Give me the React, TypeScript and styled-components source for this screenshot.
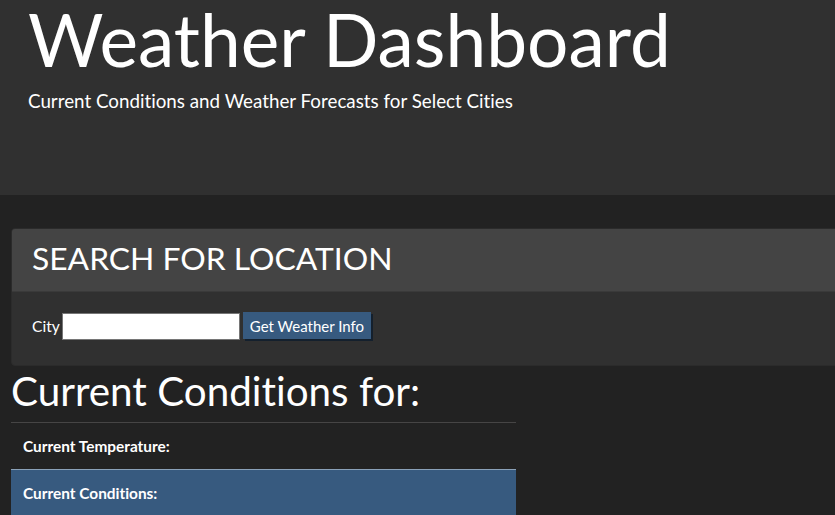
import React from "react";
import styled, { createGlobalStyle } from "styled-components";

const Global = createGlobalStyle`
  html, body { margin: 0; padding: 0; background: #222222; overflow: hidden; }
  body {
    font-family: Lato, "Open Sans", sans-serif;
    color: #ffffff;
    font-variant-ligatures: none;
  }
  * { box-sizing: border-box; }
`;

const Page = styled.div`
  width: 835px;
  height: 515px;
  overflow: hidden;
  background: #222222;
`;

const Jumbotron = styled.header`
  height: 195px;
  background: #303030;
  padding: 0 0 0 28px;
`;

const Title = styled.h1`
  margin: 0;
  font-size: 73px;
  font-weight: 400;
  line-height: 78px;
`;

const Subtitle = styled.p`
  margin: 11px 0 0 0;
  font-size: 18.8px;
  line-height: 24px;
  font-weight: 400;
`;

const Main = styled.main`
  padding: 33px 0 0 11px;
`;

const Panel = styled.section`
  margin-right: -40px;
  border: 1px solid #2b2b2b;
  border-radius: 4px;
  background: #303030;
  overflow: hidden;
`;

const PanelHeading = styled.div`
  background: #444444;
  height: 63px;
  padding: 0 0 0 20px;
  display: flex;
  align-items: center;
  border-bottom: 1px solid #3a3a3a;
`;

const PanelTitle = styled.h2`
  margin: 0;
  font-size: 31.8px;
  font-weight: 400;
  line-height: 1;
  padding-bottom: 2px;
`;

const PanelBody = styled.div`
  height: 73px;
  padding: 20px 0 0 20px;
  display: flex;
  align-items: flex-start;
  font-size: 15px;
`;

const Label = styled.label`
  margin-right: 2px;
  font-size: 15.6px;
  line-height: 28px;
`;

const Input = styled.input`
  width: 178px;
  height: 27px;
  margin: 1px 3px 0 0;
  border: 1px solid #767676;
  background: #fff;
`;

const Button = styled.button`
  height: 27px;
  padding: 0 7px;
  background: #375a7f;
  color: #fff;
  border: none;
  font-family: Lato, sans-serif;
  font-size: 15px;
  font-variant-ligatures: none;
  box-shadow: 2px 2px 0 #14202d;
`;

const ConditionsTitle = styled.h2`
  margin: 0;
  font-size: 40.4px;
  font-weight: 400;
  line-height: 50px;
`;

const Table = styled.div`
  width: 505px;
  margin-top: 6px;
  border-top: 1px solid #464545;
`;

const Row = styled.div<{ $info?: boolean }>`
  height: 46px;
  display: flex;
  align-items: center;
  padding-left: 12px;
  font-size: 15.4px;
  font-weight: 700;
  background: ${(p) => (p.$info ? "#375a7f" : "transparent")};
  border-top: ${(p) => (p.$info ? "1px solid #8aa1b8" : "none")};
`;

export default function App() {
  return (
    <Page>
      <Global />
      <Jumbotron>
        <Title>Weather Dashboard</Title>
        <Subtitle>Current Conditions and Weather Forecasts for Select Cities</Subtitle>
      </Jumbotron>
      <Main>
        <Panel>
          <PanelHeading>
            <PanelTitle>SEARCH FOR LOCATION</PanelTitle>
          </PanelHeading>
          <PanelBody>
            <Label htmlFor="city">City</Label>
            <Input id="city" type="text" />
            <Button>Get Weather Info</Button>
          </PanelBody>
        </Panel>
        <ConditionsTitle>Current Conditions for:</ConditionsTitle>
        <Table>
          <Row>Current Temperature:</Row>
          <Row $info>Current Conditions:</Row>
        </Table>
      </Main>
    </Page>
  );
}
